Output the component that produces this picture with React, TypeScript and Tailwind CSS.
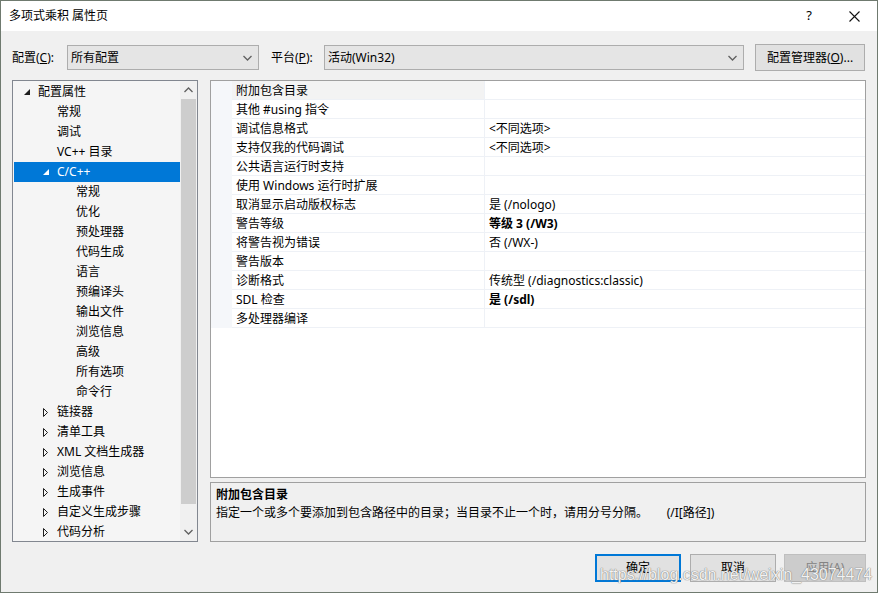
import React from "react";

const FONT = "font-['Noto_Sans','Noto_Sans_CJK_SC',sans-serif]";

type TreeItem = { label: string; level: number; tri?: "open" | "closed"; selected?: boolean };

const tree: TreeItem[] = [
  { label: "配置属性", level: 0, tri: "open" },
  { label: "常规", level: 1 },
  { label: "调试", level: 1 },
  { label: "VC++ 目录", level: 1 },
  { label: "C/C++", level: 1, tri: "open", selected: true },
  { label: "常规", level: 2 },
  { label: "优化", level: 2 },
  { label: "预处理器", level: 2 },
  { label: "代码生成", level: 2 },
  { label: "语言", level: 2 },
  { label: "预编译头", level: 2 },
  { label: "输出文件", level: 2 },
  { label: "浏览信息", level: 2 },
  { label: "高级", level: 2 },
  { label: "所有选项", level: 2 },
  { label: "命令行", level: 2 },
  { label: "链接器", level: 1, tri: "closed" },
  { label: "清单工具", level: 1, tri: "closed" },
  { label: "XML 文档生成器", level: 1, tri: "closed" },
  { label: "浏览信息", level: 1, tri: "closed" },
  { label: "生成事件", level: 1, tri: "closed" },
  { label: "自定义生成步骤", level: 1, tri: "closed" },
  { label: "代码分析", level: 1, tri: "closed" },
];

const props: { name: string; value: string; bold?: boolean }[] = [
  { name: "附加包含目录", value: "" },
  { name: "其他 #using 指令", value: "" },
  { name: "调试信息格式", value: "<不同选项>" },
  { name: "支持仅我的代码调试", value: "<不同选项>" },
  { name: "公共语言运行时支持", value: "" },
  { name: "使用 Windows 运行时扩展", value: "" },
  { name: "取消显示启动版权标志", value: "是 (/nologo)" },
  { name: "警告等级", value: "等级 3 (/W3)", bold: true },
  { name: "将警告视为错误", value: "否 (/WX-)" },
  { name: "警告版本", value: "" },
  { name: "诊断格式", value: "传统型 (/diagnostics:classic)" },
  { name: "SDL 检查", value: "是 (/sdl)", bold: true },
  { name: "多处理器编译", value: "" },
];

function Chevron({ up = false, color = "#606060" }: { up?: boolean; color?: string }) {
  return (
    <svg width="9" height="6" viewBox="0 0 9 6">
      <path d={up ? "M0.5 5 L4.5 1 L8.5 5" : "M0.5 1 L4.5 5 L8.5 1"} fill="none" stroke={color} strokeWidth="1.3" />
    </svg>
  );
}

function Tri({ kind, white }: { kind: "open" | "closed"; white?: boolean }) {
  if (kind === "open") {
    return (
      <svg width="6" height="6" viewBox="0 0 6 6">
        <path d="M6 0 L6 6 L0 6 Z" fill={white ? "#ffffff" : "#1e1e1e"} />
      </svg>
    );
  }
  return (
    <svg width="5" height="9" viewBox="0 0 5 9">
      <path d="M0.5 0.5 L4.5 4.5 L0.5 8.5 Z" fill="none" stroke="#1e1e1e" strokeWidth="1" />
    </svg>
  );
}

function Combo({ text, w }: { text: string; w: string }) {
  return (
    <div className={`${w} h-[25px] bg-[#e5e5e5] border border-[#adadad] flex items-center justify-between pl-[3px] pr-[6px]`}>
      <span className="text-[12px] text-black">{text}</span>
      <Chevron />
    </div>
  );
}

export default function App() {
  return (
    <div className={`${FONT} relative w-[878px] h-[593px] bg-[#f0f0f0] border border-[#6f7a6f] flex flex-col text-[12px] text-black overflow-hidden`}>
      {/* Title bar */}
      <div className="h-[30px] bg-white flex items-center justify-between pl-[8px] shrink-0">
        <span className="text-[12px] text-black">多项式乘积 属性页</span>
        <div className="flex items-center h-full">
          <span className="w-[46px] pl-[2px] text-center text-[13px] text-black">?</span>
          <span className="w-[46px] h-full flex items-center justify-center">
            <svg width="11" height="11" viewBox="0 0 11 11">
              <path d="M0.5 0.5 L10.5 10.5 M10.5 0.5 L0.5 10.5" stroke="#111" strokeWidth="1.1" />
            </svg>
          </span>
        </div>
      </div>

      {/* Config row */}
      <div className="flex items-center h-[27px] mt-[13px] pl-[11px] shrink-0">
        <span className="w-[55px]">配置(<u>C</u>):</span>
        <Combo text="所有配置" w="w-[192px]" />
        <span className="ml-[12px] w-[53px]">平台(<u>P</u>):</span>
        <Combo text="活动(Win32)" w="w-[420px]" />
        <div className="ml-[11px] w-[110px] h-[27px] bg-[#e1e1e1] border border-[#adadad] flex items-center justify-center">
          配置管理器(<u>O</u>)...
        </div>
      </div>

      {/* Main */}
      <div className="flex mt-[9px] pl-[11px] h-[463px] shrink-0">
        {/* Tree */}
        <div className="w-[186px] h-[462px] border border-[#828790] bg-[#f5f5f5] flex">
          <div className="flex-1 pt-[1px] pl-[1px] overflow-hidden">
            {tree.map((t, i) => (
              <div
                key={i}
                className={`h-[20px] flex items-center ${t.selected ? "bg-[#0078d7] text-white" : ""}`}
                style={{ paddingLeft: 10 + t.level * 19 }}
              >
                <span className="w-[14px] flex items-center">
                  {t.tri && <Tri kind={t.tri} white={t.selected} />}
                </span>
                <span>{t.label}</span>
              </div>
            ))}
          </div>
          <div className="w-[17px] bg-[#f0f0f0] flex flex-col">
            <div className="h-[18px] flex items-center justify-center">
              <Chevron up color="#606060" />
            </div>
            <div className="mx-[1px] h-[405px] bg-[#cdcdcd]" />
            <div className="flex-1" />
            <div className="h-[18px] flex items-center justify-center">
              <Chevron color="#606060" />
            </div>
          </div>
        </div>

        {/* Right column */}
        <div className="ml-[12px] w-[656px] flex flex-col">
          <div className="h-[398px] border border-[#a0a0a0] bg-white flex flex-col">
            {props.map((p, i) => (
              <div key={i} className="h-[19px] flex">
                <div className="w-[21px] bg-[#f5f7fa]" />
                <div
                  className={`w-[252px] border-b border-[#eef1f6] pl-[4px] pt-[2px] flex items-center ${i === 0 ? "bg-[#f3f3f3]" : ""}`}
                >
                  {p.name}
                </div>
                <div className="flex-1 border-l border-b border-[#eef1f6] pl-[4px] pt-[2px] flex items-center">
                  <span className={p.bold ? "font-bold" : ""}>{p.value}</span>
                </div>
              </div>
            ))}
          </div>
          <div className="mt-[4px] h-[60px] border border-[#a0a0a0] bg-[#f0f0f0] px-[5px] pt-[3px] leading-[18px]">
            <div className="font-bold">附加包含目录</div>
            <div className="whitespace-pre">指定一个或多个要添加到包含路径中的目录；当目录不止一个时，请用分号分隔。      (/I[路径])</div>
          </div>
        </div>
      </div>

      {/* Buttons */}
      <div className="flex justify-end items-center mt-[11px] pr-[11px] shrink-0">
        <div className="w-[86px] h-[28px] bg-[#e1e1e1] border-2 border-[#0078d7] flex items-center justify-center">确定</div>
        <div className="ml-[9px] w-[86px] h-[28px] bg-[#e1e1e1] border border-[#adadad] flex items-center justify-center">取消</div>
        <div className="ml-[8px] w-[82px] h-[28px] bg-[#cccccc] border border-[#bfbfbf] text-[#838383] flex items-center justify-center">应用(A)</div>
      </div>

      {/* Watermark */}
      <span className="absolute left-[599px] top-[562px] text-[16px] font-['Liberation_Sans',sans-serif] text-white/90 [text-shadow:0_0_1px_#777,0_0_1px_#777] pointer-events-none">
        https://blog.csdn.net/weixin_43074474
      </span>
    </div>
  );
}
